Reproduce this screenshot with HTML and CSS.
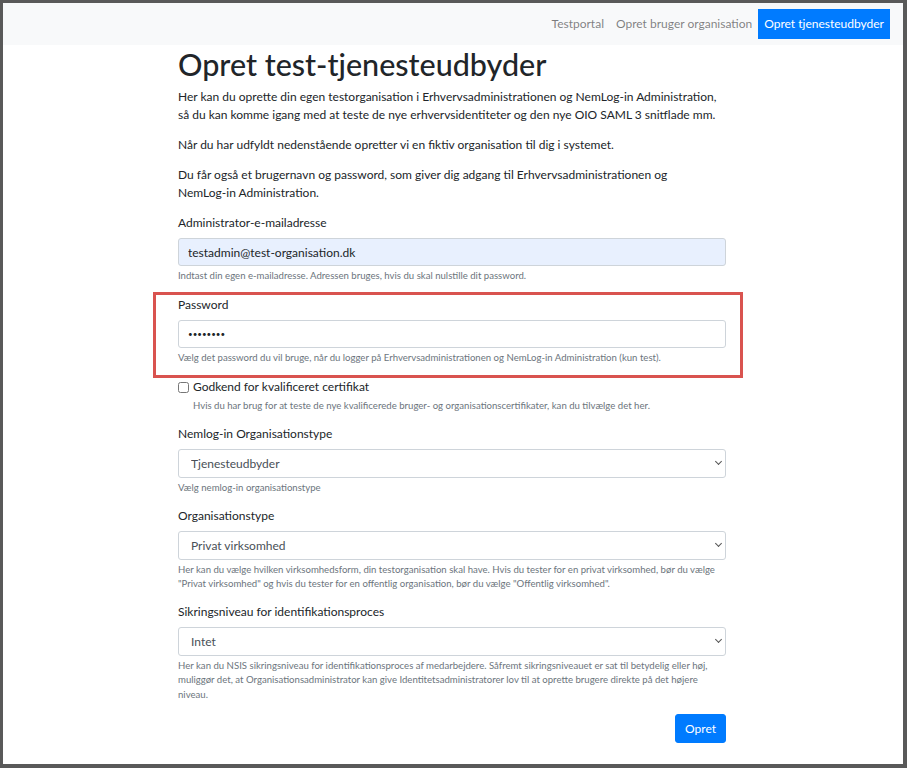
FILE: index.html
```html
<!DOCTYPE html>
<html lang="da">
<head>
  <meta charset="UTF-8" />
  <meta name="viewport" content="width=device-width, initial-scale=1.0" />
  <title>Opret test-tjenesteudbyder</title>
  <link rel="stylesheet" href="styles.css">
</head>
<body>
  <div class="page">
    <nav class="navbar">
      <ul class="nav">
        <li><a class="nav-link" href="#">Testportal</a></li>
        <li><a class="nav-link" href="#">Opret bruger organisation</a></li>
        <li><a class="nav-link active" href="#">Opret tjenesteudbyder</a></li>
      </ul>
    </nav>

    <main class="container">
      <h1>Opret test-tjenesteudbyder</h1>
      <p>Her kan du oprette din egen testorganisation i Erhvervsadministrationen og NemLog-in Administration, så du kan komme igang med at teste de nye erhvervsidentiteter og den nye OIO SAML 3 snitflade mm.</p>
      <p>Når du har udfyldt nedenstående opretter vi en fiktiv organisation til dig i systemet.</p>
      <p>Du får også et brugernavn og password, som giver dig adgang til Erhvervsadministrationen og <span class="nobr">NemLog-in</span> Administration.</p>

      <form>
        <div class="form-group">
          <label for="email">Administrator-e-mailadresse</label>
          <input class="form-control autofill" type="email" id="email" value="testadmin@test-organisation.dk">
          <small class="form-text">Indtast din egen e-mailadresse. Adressen bruges, hvis du skal nulstille dit password.</small>
        </div>

        <div class="form-group marked">
          <label for="password">Password</label>
          <input class="form-control password" type="password" id="password" value="12345678">
          <small class="form-text">Vælg det password du vil bruge, når du logger på Erhvervsadministrationen og NemLog-in Administration (kun test).</small>
          <div class="highlight"></div>
        </div>

        <div class="form-group form-check">
          <input class="form-check-input" type="checkbox" id="qualified">
          <label class="form-check-label" for="qualified">Godkend for kvalificeret certifikat</label>
          <small class="form-text">Hvis du har brug for at teste de nye kvalificerede bruger- og organisationscertifikater, kan du tilvælge det her.</small>
        </div>

        <div class="form-group">
          <label for="nemlogType">Nemlog-in Organisationstype</label>
          <div class="select-wrap">
            <select class="form-control" id="nemlogType">
              <option>Tjenesteudbyder</option>
            </select>
          </div>
          <small class="form-text">Vælg nemlog-in organisationstype</small>
        </div>

        <div class="form-group">
          <label for="orgType">Organisationstype</label>
          <div class="select-wrap">
            <select class="form-control" id="orgType">
              <option>Privat virksomhed</option>
              <option>Offentlig virksomhed</option>
            </select>
          </div>
          <small class="form-text">Her kan du vælge hvilken virksomhedsform, din testorganisation skal have. Hvis du tester for en privat virksomhed, bør du vælge "Privat virksomhed" og hvis du tester for en offentlig organisation, bør du vælge "Offentlig virksomhed".</small>
        </div>

        <div class="form-group">
          <label for="level">Sikringsniveau for identifikationsproces</label>
          <div class="select-wrap">
            <select class="form-control" id="level">
              <option>Intet</option>
              <option>Betydelig</option>
              <option>Høj</option>
            </select>
          </div>
          <small class="form-text">Her kan du NSIS sikringsniveau for identifikationsproces af medarbejdere. Såfremt sikringsniveauet er sat til betydelig eller høj, muliggør det, at Organisationsadministrator kan give Identitetsadministratorer lov til at oprette brugere direkte på det højere niveau.</small>
        </div>

        <div class="actions">
          <button type="submit" class="btn btn-primary">Opret</button>
        </div>
      </form>
    </main>
  </div>
</body>
</html>
```

FILE: styles.css
```css
body {
  margin: 0;
  background: #595959;
  font-family: Lato, "Liberation Sans", sans-serif;
  font-size: 12px;
  line-height: 1.5;
  color: #212529;
}
.page {
  margin: 3px 4px 4px 3px;
  height: 761px;
  background: #fff;
  overflow: hidden;
}
.navbar {
  background: #f8f9fa;
  padding: 6px 13px 6px 12px;
  display: flex;
  justify-content: flex-end;
}
.nav {
  list-style: none;
  margin: 0;
  padding: 0;
  display: flex;
}
.nav-link {
  display: block;
  padding: 6px 6px;
  color: rgba(0,0,0,0.5);
  text-decoration: none;
}
.nav-link.active {
  background: #007bff;
  color: #fff;
}
.container {
  width: 548px;
  margin: 0 auto;
  padding-top: 1px;
  position: relative;
  left: -1px;
}
h1 {
  font-size: 30.5px;
  font-weight: 500;
  line-height: 1.18;
  margin: 0 0 6px;
}
p {
  margin: 0 0 12px;
}
.nobr {
  white-space: nowrap;
}
.form-group {
  margin-bottom: 12px;
}
.form-group.marked {
  position: relative;
}
.highlight {
  position: absolute;
  top: -4px;
  left: -25px;
  right: -17px;
  bottom: -12px;
  border: 3px solid #d9534f;
  pointer-events: none;
}
label {
  display: inline-block;
  margin-bottom: 6px;
}
.form-control {
  display: block;
  box-sizing: border-box;
  width: 100%;
  height: 28.5px;
  padding: 4.5px 9px;
  font-family: inherit;
  font-size: 12px;
  line-height: 1.5;
  color: #495057;
  background: #fff;
  border: 1px solid #ced4da;
  border-radius: 3px;
}
.form-control.autofill {
  background: #e8f0fe;
  color: #212529;
}
.form-control.password {
  font-size: 8px;
  color: #212529;
}
.select-wrap {
  position: relative;
}
.select-wrap::after {
  content: "";
  position: absolute;
  right: 5px;
  top: 10px;
  width: 4px;
  height: 4px;
  border-right: 1.5px solid #555;
  border-bottom: 1.5px solid #555;
  transform: rotate(45deg);
  pointer-events: none;
}
select.form-control {
  appearance: none;
  -webkit-appearance: none;
  padding: 4.5px 12px;
}
.form-text {
  display: block;
  margin-top: 3px;
  font-size: 9.6px;
  line-height: 1.5;
  color: #6c757d;
}
.form-check {
  position: relative;
  padding-left: 15px;
}
.form-check-input {
  position: absolute;
  left: 0;
  top: 4px;
  margin: 0;
  width: 11px;
  height: 11px;
}
.form-check-label {
  margin-bottom: 0;
}
.actions {
  text-align: right;
}
.btn {
  display: inline-block;
  font-family: inherit;
  font-size: 12px;
  line-height: 1.5;
  padding: 4.5px 9px;
  border: 1px solid transparent;
  border-radius: 3px;
  cursor: pointer;
}
.btn-primary {
  color: #fff;
  background: #007bff;
  border-color: #007bff;
}
```
